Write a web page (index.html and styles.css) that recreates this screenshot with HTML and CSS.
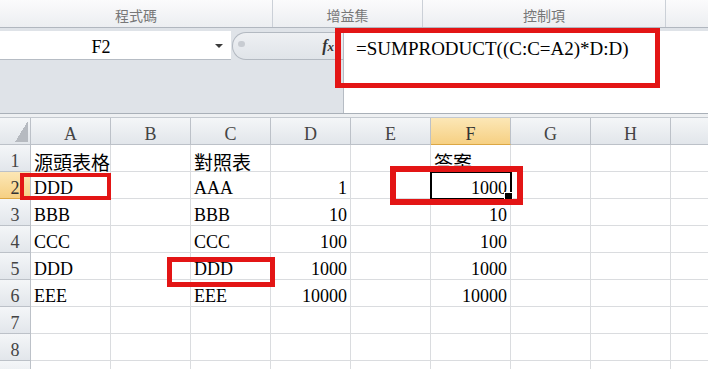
FILE: index.html
```html
<!DOCTYPE html>
<html>
<head>
<meta charset="utf-8">
<link rel="stylesheet" href="styles.css">
</head>
<body>
<div class="app">
  <div class="ribbon">
    <div class="grp g1">程式碼</div>
    <div class="grp g2">增益集</div>
    <div class="grp g3">控制項</div>
    <div class="grp g4"></div>
  </div>
  <div class="fbar">
    <div class="fleft">
      <div class="namebox"><span class="name">F2</span><span class="arrow"></span></div>
      <div class="pill"><span class="dot"></span><span class="fx">f<span class="fxx">x</span></span></div>
    </div>
    <div class="formula">=SUMPRODUCT((C:C=A2)*D:D)</div>
  </div>
  <div class="strip"></div>
  <div class="sheet">
    <div class="c h corner"><span class="tri"></span></div>
    <div class="c h">A</div><div class="c h">B</div><div class="c h">C</div><div class="c h">D</div>
    <div class="c h">E</div><div class="c h on">F</div><div class="c h">G</div><div class="c h">H</div><div class="c h last"></div>

    <div class="c h">1</div>
    <div class="c"><span class="cjk">源頭表格</span></div><div class="c"></div><div class="c"><span class="cjk">對照表</span></div><div class="c"></div>
    <div class="c"></div><div class="c"><span class="cjk">答案</span></div><div class="c"></div><div class="c"></div><div class="c last"></div>

    <div class="c h on">2</div>
    <div class="c">DDD</div><div class="c"></div><div class="c">AAA</div><div class="c n">1</div>
    <div class="c"></div><div class="c n sel">1000</div><div class="c"></div><div class="c"></div><div class="c last"></div>

    <div class="c h">3</div>
    <div class="c">BBB</div><div class="c"></div><div class="c">BBB</div><div class="c n">10</div>
    <div class="c"></div><div class="c n">10</div><div class="c"></div><div class="c"></div><div class="c last"></div>

    <div class="c h">4</div>
    <div class="c">CCC</div><div class="c"></div><div class="c">CCC</div><div class="c n">100</div>
    <div class="c"></div><div class="c n">100</div><div class="c"></div><div class="c"></div><div class="c last"></div>

    <div class="c h">5</div>
    <div class="c">DDD</div><div class="c"></div><div class="c">DDD</div><div class="c n">1000</div>
    <div class="c"></div><div class="c n">1000</div><div class="c"></div><div class="c"></div><div class="c last"></div>

    <div class="c h">6</div>
    <div class="c">EEE</div><div class="c"></div><div class="c">EEE</div><div class="c n">10000</div>
    <div class="c"></div><div class="c n">10000</div><div class="c"></div><div class="c"></div><div class="c last"></div>

    <div class="c h">7</div>
    <div class="c"></div><div class="c"></div><div class="c"></div><div class="c"></div>
    <div class="c"></div><div class="c"></div><div class="c"></div><div class="c"></div><div class="c last"></div>

    <div class="c h">8</div>
    <div class="c"></div><div class="c"></div><div class="c"></div><div class="c"></div>
    <div class="c"></div><div class="c"></div><div class="c"></div><div class="c"></div><div class="c last"></div>

    <div class="c h">9</div>
    <div class="c"></div><div class="c"></div><div class="c"></div><div class="c"></div>
    <div class="c"></div><div class="c"></div><div class="c"></div><div class="c"></div><div class="c last"></div>
  </div>

  <div class="mark m-formula"></div>
  <div class="mark m-a2"></div>
  <div class="mark m-f2"></div>
  <div class="mark m-c5"></div>
</div>
</body>
</html>
```
FILE: styles.css
```css
* { box-sizing: border-box; }
body {
  margin: 0;
  width: 708px;
  height: 369px;
  overflow: hidden;
  background: #fff;
  font-family: "Liberation Serif", "Times New Roman", serif;
  color: #000;
}
.app {
  position: relative;
  width: 708px;
  height: 369px;
  overflow: hidden;
}

/* ribbon group labels */
.ribbon {
  display: flex;
  height: 28px;
  border-bottom: 1px solid #b1b7bf;
  background: linear-gradient(#fbfbfc, #eceef1);
}
.grp {
  display: flex;
  align-items: center;
  justify-content: center;
  padding-top: 2px;
  border-right: 1px solid #cbd0d7;
  font-family: "Noto Sans CJK TC", sans-serif;
  font-size: 14px;
  color: #777;
}
.g1 { width: 273px; }
.g2 { width: 150px; }
.g3 { width: 243px; }
.g4 { flex: 1; border-right: none; }

/* formula bar */
.fbar {
  display: flex;
  height: 86px;
  border-bottom: 1px solid #a9b0b8;
  background: #dfe3e8;
}
.fleft {
  width: 343px;
  padding-top: 3px;
  display: flex;
  align-items: flex-start;
}
.namebox {
  width: 231px;
  height: 29px;
  background: #fff;
  border-bottom: 1px solid #b6bcc4;
  display: flex;
  align-items: center;
}
.name {
  width: 202px;
  text-align: center;
  font-size: 18px;
  padding-top: 5px;
}
.arrow {
  margin-left: 13px;
  margin-top: 2px;
  width: 0;
  height: 0;
  border-left: 4px solid transparent;
  border-right: 4px solid transparent;
  border-top: 4px solid #3a3a3a;
}
.pill {
  flex: 1;
  margin-left: 1px;
  margin-top: 1px;
  height: 28px;
  border: 1px solid #b3b9c1;
  border-right: none;
  border-radius: 14px 0 0 14px;
  background: linear-gradient(#eef0f3, #e0e4e9);
  display: flex;
  align-items: center;
}
.dot {
  width: 7px;
  height: 6px;
  margin-left: 5px;
  margin-top: -4px;
  border-radius: 3px;
  background: #c8ccd2;
}
.fx {
  margin-left: auto;
  margin-right: 9px;
  font-family: "Liberation Serif", serif;
  font-style: italic;
  font-weight: bold;
  font-size: 16px;
  color: #333;
}
.fxx { font-size: 13px; }
.formula {
  flex: 1;
  margin-top: 3px;
  background: #fff;
  border-left: 1px solid #b6bcc4;
  padding: 7px 0 0 12px;
  font-size: 19px;
  white-space: nowrap;
}

.strip {
  height: 3px;
  background: #eef0f2;
}

/* sheet grid */
.sheet {
  border-top: 1px solid #c4c9cf;
  display: grid;
  grid-template-columns: 31px repeat(8, 80px) 1fr;
  grid-auto-rows: 27px;
}
.c {
  display: flex;
  align-items: flex-end;
  padding: 0 3px;
  border-right: 1px solid #dadcdf;
  border-bottom: 1px solid #dadcdf;
  font-size: 18px;
  line-height: 20px;
  white-space: nowrap;
  overflow: visible;
}
.c.last { border-right: none; }
.n { justify-content: flex-end; }
.cjk {
  font-family: "Noto Sans CJK TC", sans-serif;
  font-size: 19px;
  line-height: 20px;
  position: relative;
  top: 1px;
}
.h {
  justify-content: center;
  padding: 0;
  background: linear-gradient(#f4f6f8, #e2e6eb);
  border-right-color: #bcc1c8;
  border-bottom-color: #bcc1c8;
  color: #444;
  font-size: 18px;
}
.h.on {
  background: linear-gradient(#fce7b6, #f6d083);
  border-bottom-color: #dca744;
  color: #333;
}
.corner {
  justify-content: flex-end;
  align-items: flex-end;
  padding: 0 2px 2px 0;
}
.tri {
  width: 13px;
  height: 21px;
  background: linear-gradient(to bottom right, transparent 50%, #b6bac0 50%);
}
.sel {
  position: relative;
  outline: 2px solid #000;
  outline-offset: -1px;
}
.sel::after {
  content: "";
  position: absolute;
  right: -3px;
  bottom: -3px;
  width: 7px;
  height: 7px;
  background: #000;
  border: 1px solid #fff;
}

/* red annotation boxes */
.mark {
  position: absolute;
  border: 5px solid #e31515;
  z-index: 5;
}
.m-formula { left: 335px; top: 28px; width: 325px; height: 60px; border-left-width: 6px; }
.m-a2 { left: 20px; top: 173px; width: 91px; height: 27px; border-width: 4px; }
.m-f2 { left: 390px; top: 166px; width: 133px; height: 39px; border-width: 6px; }
.m-c5 { left: 167px; top: 257px; width: 108px; height: 30px; }
```
